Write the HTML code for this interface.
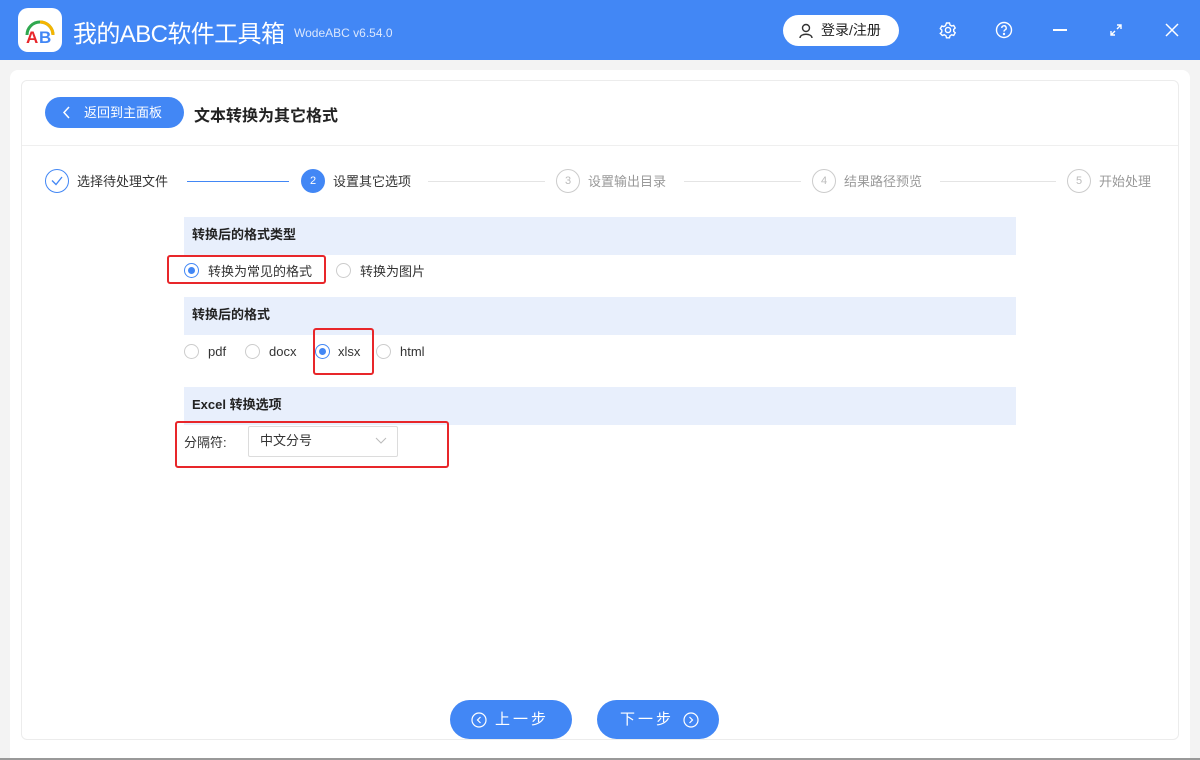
<!DOCTYPE html><html><head><meta charset="utf-8"><style>
*{margin:0;padding:0;box-sizing:border-box}
body{width:1200px;height:760px;background:#f3f3f3;font-family:"Liberation Sans","Noto Sans CJK SC",sans-serif;position:relative;overflow:hidden;color:#333}
.a{position:absolute}
.hdr{left:0;top:0;width:1200px;height:60px;background:#4287f5}
.card{left:21px;top:80px;width:1158px;height:660px;background:#fff;border:1px solid #ececec;border-radius:6px}
.sec{position:absolute;left:184px;width:832px;height:38px;background:#e8effc;font-size:13px;font-weight:bold;padding-left:8px;line-height:36px;color:#222}
.rad{position:absolute;width:15px;height:15px;border:1px solid #ccc;border-radius:50%;background:#fff}
.rad.on{border-color:#4287f5}
.rad.on::after{content:"";position:absolute;left:3px;top:3px;width:7px;height:7px;border-radius:50%;background:#4287f5}
.t{position:absolute;font-size:13px;color:#333;white-space:nowrap}
.red{position:absolute;border:2px solid #e8262a;border-radius:3px}
.sc{position:absolute;width:24px;height:24px;border-radius:50%;border:1px solid #ccc;color:#bbb;font-size:11px;text-align:center;line-height:22px}
.st{position:absolute;font-size:13px;top:171px;color:#999}
.ln{position:absolute;height:1px;top:181px;background:#e4e4e4}
.btn{position:absolute;top:700px;width:122px;height:39px;border-radius:20px;background:#4287f5;color:#fff;font-size:15px;text-align:center;line-height:39px;letter-spacing:3px}
</style></head><body>
<div class="a hdr"></div>
<div class="a" style="left:18px;top:8px;width:44px;height:44px;background:#fff;border-radius:10px"></div>
<svg class="a" style="left:18px;top:8px" width="44" height="44"><path d="M9 27 A13 13 0 0 1 35 27" fill="none" stroke="#2fa84f" stroke-width="3"/><path d="M22 14 A13 13 0 0 1 35 27" fill="none" stroke="#f6b400" stroke-width="3"/><text x="8" y="35" font-size="17" font-weight="bold" fill="#e8262a" font-family="Liberation Sans">A</text><text x="21" y="35" font-size="17" font-weight="bold" fill="#4287f5" font-family="Liberation Sans">B</text></svg>
<div class="a" style="left:73px;top:14px;font-size:24px;color:#fff;letter-spacing:-0.6px">我的ABC软件工具箱</div>
<div class="a" style="left:294px;top:26px;font-size:12px;color:#dbe7fd">WodeABC v6.54.0</div>
<div class="a" style="left:783px;top:15px;width:116px;height:31px;background:#fff;border-radius:16px;font-size:14px;line-height:31px;padding-left:38px;color:#222">登录/注册</div>
<svg class="a" style="left:798px;top:23px" width="16" height="16" fill="none" stroke="#333" stroke-width="1.4"><circle cx="8" cy="5" r="3.5"/><path d="M2 15 C2 10 14 10 14 15"/></svg>
<svg class="a" style="left:939px;top:21px" width="18" height="18" fill="none" stroke="#fff" stroke-width="1.4"><circle cx="9" cy="9" r="2.6"/><path d="M7.5 2h3l.5 2 1.7 1 2-.6 1.5 2.6-1.5 1.4v2l1.5 1.4-1.5 2.6-2-.6-1.7 1-.5 2h-3l-.5-2-1.7-1-2 .6L1.3 12.4 2.8 11V9L1.3 7.6 2.8 5l2 .6 1.7-1z"/></svg>
<svg class="a" style="left:995px;top:21px" width="18" height="18" fill="none" stroke="#fff" stroke-width="1.4"><circle cx="9" cy="9" r="7.5"/><path d="M6.8 7a2.2 2.2 0 1 1 3 2c-.7.3-.8.8-.8 1.6"/><circle cx="9" cy="13" r=".5" fill="#fff"/></svg>
<div class="a" style="left:1053px;top:29px;width:14px;height:1.5px;background:#fff"></div>
<svg class="a" style="left:1109px;top:23px" width="14" height="14" fill="none" stroke="#fff" stroke-width="1.4"><path d="M8 2h4v4M12 2L8 6M6 12H2V8M2 12l4-4"/></svg>
<svg class="a" style="left:1165px;top:23px" width="14" height="14" stroke="#fff" stroke-width="1.5"><path d="M1 1l12 12M13 1L1 13"/></svg>
<div class="a" style="left:10px;top:70px;width:1180px;height:690px;background:#fff;border-radius:8px 8px 0 0"></div>
<div class="a card"></div>
<div class="a" style="left:22px;top:145px;width:1156px;height:1px;background:#efefef"></div>
<div class="a" style="left:45px;top:97px;width:139px;height:31px;background:#4287f5;border-radius:16px;color:#fff;font-size:13px;line-height:31px;padding-left:39px">返回到主面板</div>
<svg class="a" style="left:62px;top:106px" width="10" height="13" fill="none" stroke="#fff" stroke-width="1.5"><path d="M7 1L2 6.5 7 12"/></svg>
<div class="a" style="left:194px;top:102px;font-size:16px;color:#222;font-weight:bold">文本转换为其它格式</div>
<div class="sc" style="left:45px;top:169px;border-color:#4287f5"></div>
<svg class="a" style="left:51px;top:176px" width="12" height="10" fill="none" stroke="#4287f5" stroke-width="1.3"><path d="M1 4.5l4 4L11 1"/></svg>
<div class="st" style="left:77px;color:#333">选择待处理文件</div>
<div class="ln" style="left:187px;width:102px;background:#4287f5"></div>
<div class="sc" style="left:301px;top:169px;background:#4287f5;border-color:#4287f5;color:#fff">2</div>
<div class="st" style="left:333px;color:#333">设置其它选项</div>
<div class="ln" style="left:428px;width:117px"></div>
<div class="sc" style="left:556px;top:169px">3</div>
<div class="st" style="left:588px">设置输出目录</div>
<div class="ln" style="left:684px;width:117px"></div>
<div class="sc" style="left:812px;top:169px">4</div>
<div class="st" style="left:844px">结果路径预览</div>
<div class="ln" style="left:940px;width:116px"></div>
<div class="sc" style="left:1067px;top:169px">5</div>
<div class="st" style="left:1099px">开始处理</div>
<div class="sec" style="top:217px">转换后的格式类型</div>
<div class="rad on" style="left:184px;top:263px"></div><div class="t" style="left:208px;top:261px">转换为常见的格式</div>
<div class="rad" style="left:336px;top:263px"></div><div class="t" style="left:360px;top:261px">转换为图片</div>
<div class="sec" style="top:297px">转换后的格式</div>
<div class="rad" style="left:184px;top:344px"></div><div class="t" style="left:208px;top:344px">pdf</div>
<div class="rad" style="left:245px;top:344px"></div><div class="t" style="left:269px;top:344px">docx</div>
<div class="rad on" style="left:315px;top:344px"></div><div class="t" style="left:338px;top:344px">xlsx</div>
<div class="rad" style="left:376px;top:344px"></div><div class="t" style="left:400px;top:344px">html</div>
<div class="sec" style="top:387px">Excel 转换选项</div>
<div class="t" style="left:184px;top:432px">分隔符:</div>
<div class="a" style="left:248px;top:426px;width:150px;height:31px;border:1px solid #dcdcdc;border-radius:2px;font-size:13px;line-height:28px;padding-left:11px">中文分号</div>
<svg class="a" style="left:375px;top:437px" width="12" height="8" fill="none" stroke="#bbb"><path d="M1 1l5 5 5-5"/></svg>
<div class="red" style="left:167px;top:255px;width:159px;height:29px"></div>
<div class="red" style="left:313px;top:328px;width:61px;height:47px"></div>
<div class="red" style="left:175px;top:421px;width:274px;height:47px"></div>
<div class="btn" style="left:450px;padding-left:22px">上一步</div>
<div class="btn" style="left:597px;padding-right:22px">下一步</div>
<svg class="a" style="left:471px;top:712px" width="16" height="16" fill="none" stroke="#fff" stroke-width="1.2"><circle cx="8" cy="8" r="7"/><path d="M9.5 5L6.5 8l3 3"/></svg>
<svg class="a" style="left:683px;top:712px" width="16" height="16" fill="none" stroke="#fff" stroke-width="1.2"><circle cx="8" cy="8" r="7"/><path d="M6.5 5l3 3-3 3"/></svg>
<div class="a" style="left:0;top:758px;width:1200px;height:2px;background:#999"></div>
</body></html>
